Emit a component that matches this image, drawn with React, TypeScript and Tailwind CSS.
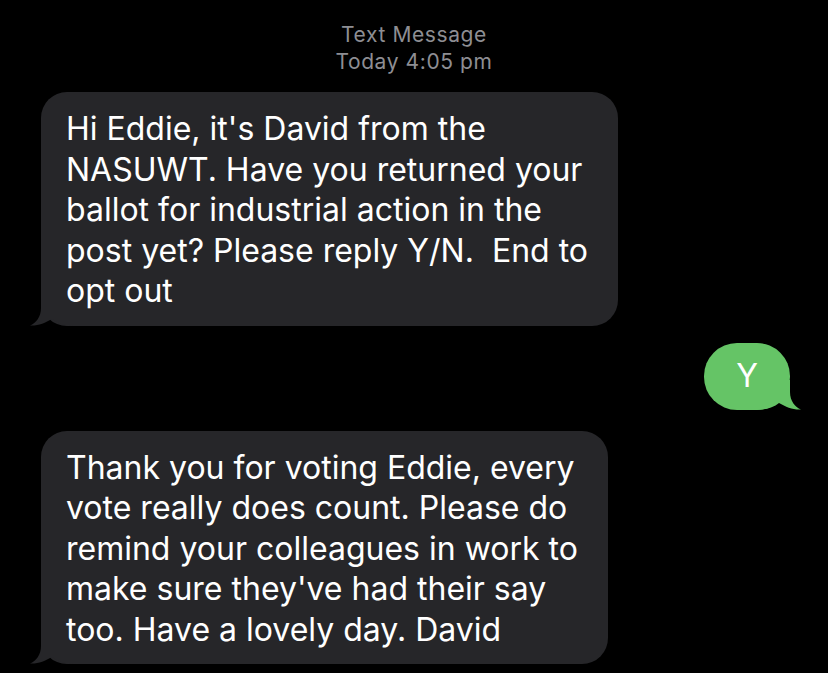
import React from "react";

const font = { fontFamily: "Inter, 'Noto Sans', sans-serif" };

function TailLeft({ color }: { color: string }) {
  return (
    <svg
      className="absolute bottom-0 left-[-11px]"
      width="48"
      height="30"
      viewBox="0 0 48 30"
    >
      <path
        d="M11 0 L11 12 C11 21 6 27 0 29.5 C8 30 15 27 22 23 C28 28 36 30 48 30 L48 0 Z"
        fill={color}
      />
    </svg>
  );
}

function TailRight({ color }: { color: string }) {
  return (
    <svg
      className="absolute bottom-0 right-[-11px] -scale-x-100"
      width="48"
      height="30"
      viewBox="0 0 48 30"
    >
      <path
        d="M11 0 L11 12 C11 21 6 27 0 29.5 C8 30 15 27 22 23 C28 28 36 30 48 30 L48 0 Z"
        fill={color}
      />
    </svg>
  );
}

function Incoming({ lines }: { lines: string[] }) {
  return (
    <div className="relative ml-[41px] self-start rounded-[26px] bg-[#262629] pl-[25px] pr-[30px] pt-[17px] pb-[14px]">
      <TailLeft color="#262629" />
      <div className="relative text-[32px] leading-[40.5px] text-white whitespace-pre">
        {lines.map((l, i) => (
          <div key={i}>{l}</div>
        ))}
      </div>
    </div>
  );
}

export default function App() {
  return (
    <div
      className="flex h-[673px] w-[828px] flex-col overflow-hidden bg-black"
      style={font}
    >
      <div className="flex flex-col items-center pt-[21px] text-[21px] leading-[27px] tracking-[0.6px] text-[#8e8e93]">
        <div>Text Message</div>
        <div>Today 4:05 pm</div>
      </div>

      <div className="mt-[17px] flex flex-col">
        <Incoming
          lines={[
            "Hi Eddie, it's David from the",
            "NASUWT. Have you returned your",
            "ballot for industrial action in the",
            "post yet? Please reply Y/N.  End to",
            "opt out",
          ]}
        />

        <div className="relative mr-[38px] mt-[17px] flex h-[67px] w-[86px] items-center justify-center self-end rounded-[33px] bg-[#65c466]">
          <TailRight color="#65c466" />
          <span className="relative text-[32px] text-white">Y</span>
        </div>

        <div className="mt-[21px] flex flex-col">
          <Incoming
            lines={[
              "Thank you for voting Eddie, every",
              "vote really does count. Please do",
              "remind your colleagues in work to",
              "make sure they've had their say",
              "too. Have a lovely day. David",
            ]}
          />
        </div>
      </div>
    </div>
  );
}
